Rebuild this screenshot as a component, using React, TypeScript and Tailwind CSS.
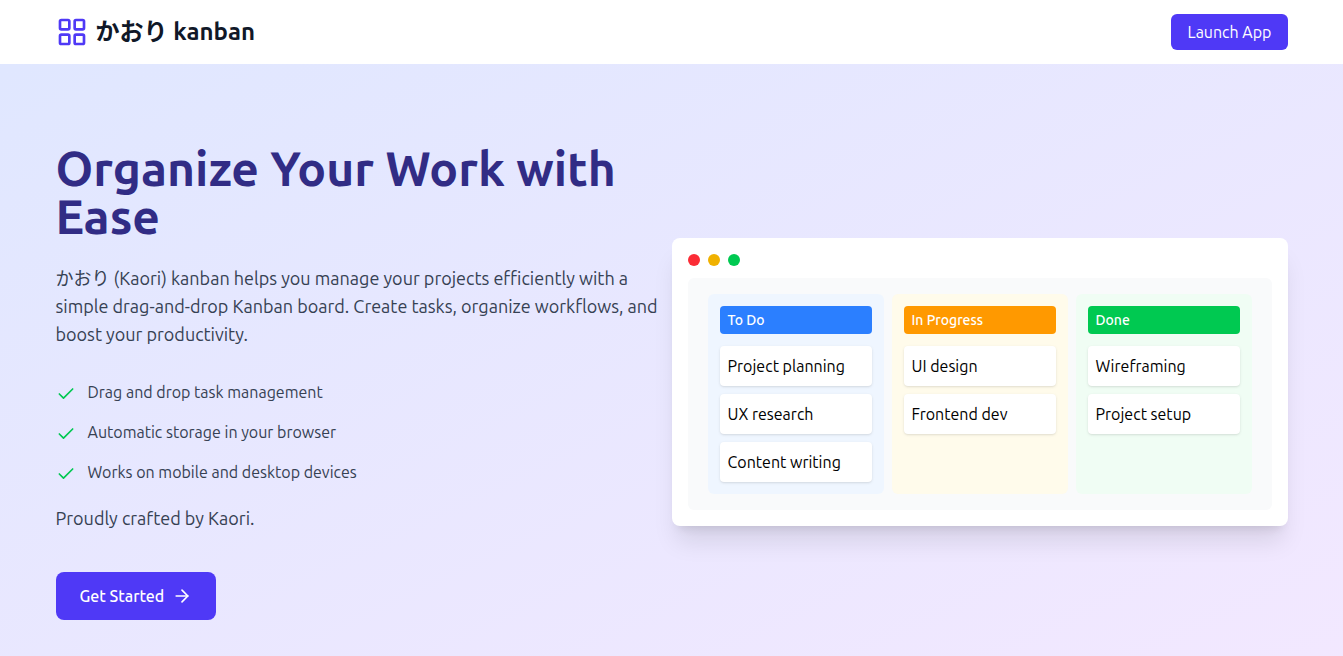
import { ArrowRight, Check, LayoutGrid } from "lucide-react";

const features = [
  "Drag and drop task management",
  "Automatic storage in your browser",
  "Works on mobile and desktop devices",
];

const columns = [
  {
    title: "To Do",
    panel: "bg-blue-50",
    header: "bg-blue-500",
    tasks: ["Project planning", "UX research", "Content writing"],
  },
  {
    title: "In Progress",
    panel: "bg-amber-50",
    header: "bg-[#ff9900]",
    tasks: ["UI design", "Frontend dev"],
  },
  {
    title: "Done",
    panel: "bg-green-50",
    header: "bg-green-500",
    tasks: ["Wireframing", "Project setup"],
  },
];

function Header() {
  return (
    <header className="bg-white">
      <div className="mx-auto flex h-16 max-w-7xl items-center justify-between px-6">
        <a href="#" className="flex items-center gap-2 text-2xl font-semibold text-gray-900">
          <LayoutGrid className="size-8 text-indigo-600" />
          <span>かおり kanban</span>
        </a>
        <button type="button" className="h-9 rounded-md bg-indigo-600 px-4 text-base text-white">
          Launch App
        </button>
      </div>
    </header>
  );
}

function BoardPreview() {
  return (
    <div className="rounded-lg bg-white p-4 shadow-xl">
      <div className="mb-3 flex gap-2">
        <span className="size-3 rounded-full bg-red-500" />
        <span className="size-3 rounded-full bg-yellow-500" />
        <span className="size-3 rounded-full bg-green-500" />
      </div>
      <div className="grid grid-cols-3 gap-2 rounded-md bg-gray-50 px-5 py-4">
        {columns.map((column) => (
          <section key={column.title} className={`rounded-md p-3 ${column.panel}`}>
            <h2 className={`mb-3 rounded px-2 py-1 text-sm font-medium text-white ${column.header}`}>
              {column.title}
            </h2>
            <ul className="space-y-2">
              {column.tasks.map((task) => (
                <li key={task} className="rounded bg-white p-2 text-base whitespace-nowrap text-black shadow-sm">
                  {task}
                </li>
              ))}
            </ul>
          </section>
        ))}
      </div>
    </div>
  );
}

export default function App() {
  return (
    <div className="flex min-h-screen flex-col font-['Ubuntu','Open_Sans','Noto_Sans_CJK_JP',sans-serif]">
      <Header />
      <main className="flex-1 bg-linear-to-br from-indigo-100 to-purple-100">
        <div className="mx-auto grid max-w-7xl items-center px-6 py-20 md:grid-cols-2">
          <div>
            <h1 className="text-5xl leading-none font-semibold text-indigo-900">
              Organize Your Work with Ease
            </h1>
            <p className="mt-6 text-lg leading-7 text-gray-700">
              かおり (Kaori) kanban helps you manage your projects efficiently with a simple
              drag-and-drop Kanban board. Create tasks, organize workflows, and boost your
              productivity.
            </p>
            <ul className="mt-8 space-y-4">
              {features.map((feature) => (
                <li key={feature} className="flex items-start gap-3 text-gray-700">
                  <Check className="mt-1 size-5 text-green-500" />
                  {feature}
                </li>
              ))}
            </ul>
            <p className="mt-5 text-lg leading-7 text-gray-700">Proudly crafted by Kaori.</p>
            <button
              type="button"
              className="mt-10 flex h-12 items-center gap-2 rounded-lg bg-indigo-600 px-6 font-medium text-white"
            >
              Get Started
              <ArrowRight className="size-5" />
            </button>
          </div>
          <BoardPreview />
        </div>
      </main>
    </div>
  );
}
